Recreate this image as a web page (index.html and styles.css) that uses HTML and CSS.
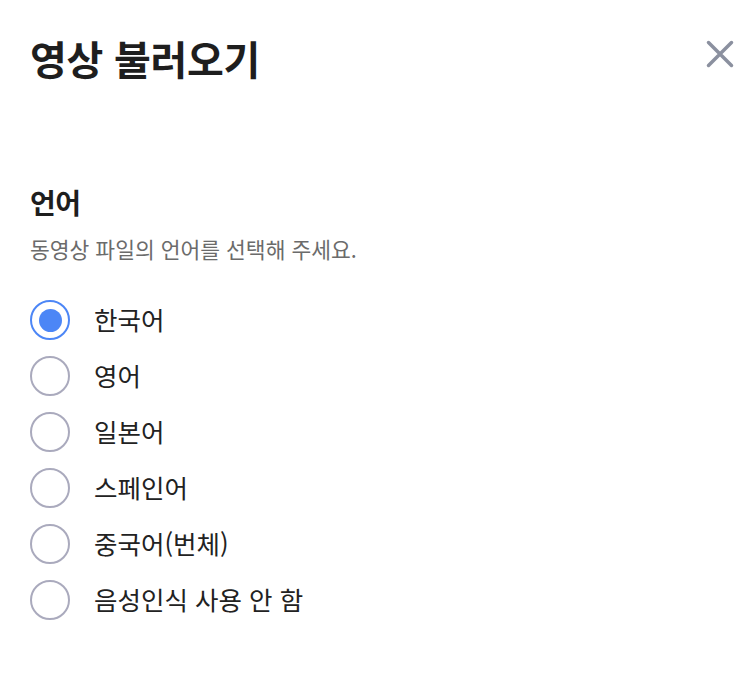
FILE: index.html
```html
<!DOCTYPE html>
<html lang="ko">
<head>
    <meta charset="UTF-8">
    <title>영상 불러오기</title>
    <link rel="stylesheet" href="styles.css">
</head>
<body>

<div class="modal">
    <div class="modal-header">
        <h1>영상 불러오기</h1>
        <button class="close-button" type="button" aria-label="닫기">
            <svg width="28" height="28" viewBox="0 0 28 28">
                <path d="M2.5 2.5 L25.5 25.5 M25.5 2.5 L2.5 25.5" stroke="#8b909f" stroke-width="3.5" stroke-linecap="round" fill="none"/>
            </svg>
        </button>
    </div>

    <div class="section">
        <h2>언어</h2>
        <p class="description">동영상 파일의 언어를 선택해 주세요.</p>

        <form class="radio-list">
            <label class="radio-item">
                <input type="radio" name="lang" value="ko" checked>
                <span class="radio-mark"></span>
                <span class="radio-label">한국어</span>
            </label>
            <label class="radio-item">
                <input type="radio" name="lang" value="en">
                <span class="radio-mark"></span>
                <span class="radio-label">영어</span>
            </label>
            <label class="radio-item">
                <input type="radio" name="lang" value="ja">
                <span class="radio-mark"></span>
                <span class="radio-label">일본어</span>
            </label>
            <label class="radio-item">
                <input type="radio" name="lang" value="es">
                <span class="radio-mark"></span>
                <span class="radio-label">스페인어</span>
            </label>
            <label class="radio-item">
                <input type="radio" name="lang" value="zh-tw">
                <span class="radio-mark"></span>
                <span class="radio-label">중국어(번체)</span>
            </label>
            <label class="radio-item">
                <input type="radio" name="lang" value="none">
                <span class="radio-mark"></span>
                <span class="radio-label">음성인식 사용 안 함</span>
            </label>
        </form>
    </div>
</div>

</body>
</html>
```

FILE: styles.css
```css
body {
    margin: 0;
    padding: 0;
    background-color: #ffffff;
    font-family: "Noto Sans CJK KR", "Noto Sans", sans-serif;
    color: #1e1e1e;
}

.modal {
    padding: 30px 20px 40px 30px;
}

.modal-header {
    display: flex;
    justify-content: space-between;
    align-items: flex-start;
}

.modal-header h1 {
    margin: 0;
    font-size: 40px;
    font-weight: 700;
    letter-spacing: -0.3px;
    line-height: 56px;
}

.close-button {
    background: none;
    border: none;
    padding: 0;
    margin-top: 10px;
    width: 28px;
    height: 28px;
    cursor: pointer;
}

.section {
    margin-top: 96px;
}

.section h2 {
    margin: 0;
    font-size: 28px;
    font-weight: 700;
    letter-spacing: -0.5px;
    line-height: 40px;
}

.description {
    margin: 12px 0 0;
    font-size: 21.5px;
    color: #6b6b6b;
    letter-spacing: 0;
    line-height: 30px;
}

.radio-list {
    display: flex;
    flex-direction: column;
    gap: 16px;
    margin-top: 36px;
}

.radio-item {
    display: flex;
    align-items: center;
    gap: 24px;
    cursor: pointer;
}

.radio-item input {
    display: none;
}

.radio-mark {
    width: 36px;
    height: 36px;
    border: 2px solid #aaaabd;
    border-radius: 50%;
    display: flex;
    align-items: center;
    justify-content: center;
}

.radio-item input:checked + .radio-mark {
    border-color: #4c86f6;
}

.radio-item input:checked + .radio-mark::after {
    content: "";
    width: 23px;
    height: 23px;
    border-radius: 50%;
    background-color: #4c86f6;
}

.radio-label {
    font-size: 25.5px;
    line-height: 36px;
    margin-top: -3px;
    color: #222222;
    letter-spacing: 0;
}
```
